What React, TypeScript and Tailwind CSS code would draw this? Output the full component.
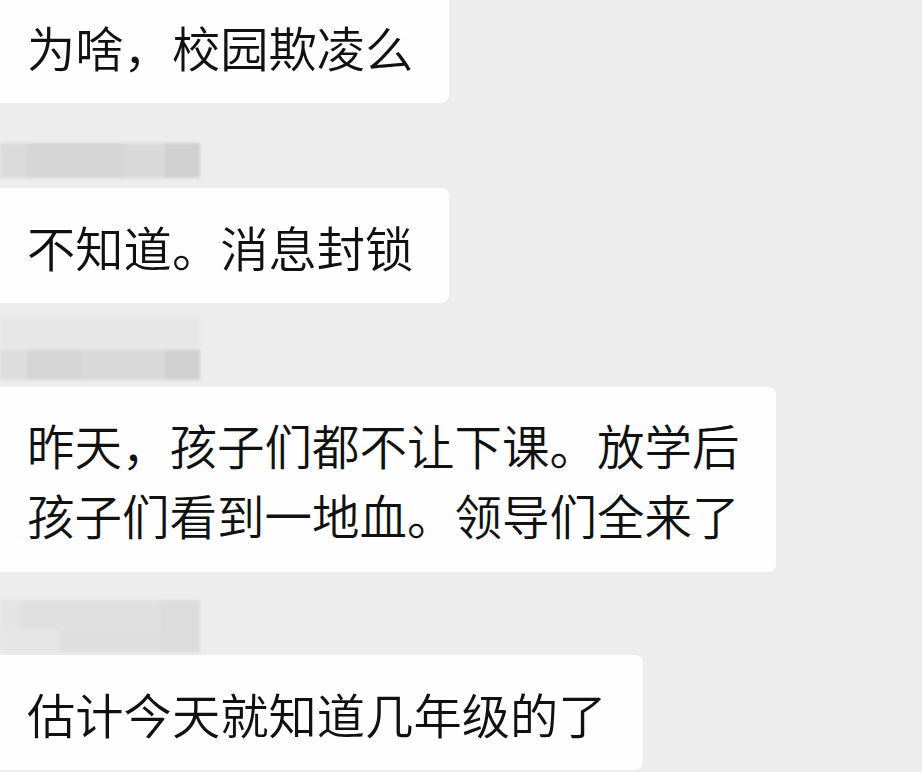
type Block = { w: number; c: string };
type Row = { h: number; blocks: Block[] };

// blurred sender names (pixelated in the screenshot)
const NAMES: Record<string, Row[]> = {
  a: [
    { h: 35, blocks: [{ w: 27, c: "#dadada" }, { w: 98, c: "#d5d5d5" }, { w: 40, c: "#d9d9d9" }, { w: 35, c: "#d0d0d0" }] },
  ],
  b: [
    { h: 33, blocks: [{ w: 200, c: "#e7e7e7" }] },
    { h: 30, blocks: [{ w: 27, c: "#dddddd" }, { w: 55, c: "#d5d5d5" }, { w: 83, c: "#d9d9d9" }, { w: 35, c: "#d0d0d0" }] },
  ],
  c: [
    { h: 30, blocks: [{ w: 20, c: "#e4e4e4" }, { w: 140, c: "#e0e0e0" }, { w: 40, c: "#dcdcdc" }] },
    { h: 23, blocks: [{ w: 60, c: "#e6e6e6" }, { w: 100, c: "#dfdfdf" }, { w: 40, c: "#dcdcdc" }] },
  ],
};

function BlurName({ rows }: { rows: Row[] }) {
  return (
    <div className="flex flex-col blur-[1.5px]">
      {rows.map((row, i) => (
        <div key={i} className="flex" style={{ height: row.h }}>
          {row.blocks.map((b, j) => (
            <div key={j} style={{ width: b.w, backgroundColor: b.c }} />
          ))}
        </div>
      ))}
    </div>
  );
}

function Bubble({ lines, size = "text-[48.3px]" }: { lines: string[]; size?: string }) {
  return (
    <div className={`-ml-3 bg-[#fefefe] rounded-lg pl-[39px] pr-[36px] pt-[23px] pb-[22px] leading-[70px] font-[350] text-[#111111] whitespace-nowrap ${size}`}>
      {lines.map((l, i) => (
        <div key={i}>{l}</div>
      ))}
    </div>
  );
}

export default function App() {
  return (
    <div
      className="w-[922px] h-[772px] overflow-hidden bg-[#ededed] flex flex-col items-start"
      style={{ fontFamily: '"Noto Sans CJK SC", "Noto Sans", sans-serif' }}
    >
      <div className="-mt-[12px]">
        <Bubble lines={["为啥，校园欺凌么"]} />
      </div>

      <div className="mt-[40px]">
        <BlurName rows={NAMES.a} />
      </div>
      <div className="mt-[10px]">
        <Bubble lines={["不知道。消息封锁"]} />
      </div>

      <div className="mt-[14px]">
        <BlurName rows={NAMES.b} />
      </div>
      <div className="mt-[7px]">
        <Bubble
          size="text-[47.5px]"
          lines={["昨天，孩子们都不让下课。放学后", "孩子们看到一地血。领导们全来了"]}
        />
      </div>

      <div className="mt-[28px]">
        <BlurName rows={NAMES.c} />
      </div>
      <div className="mt-[2px]">
        <Bubble lines={["估计今天就知道几年级的了"]} />
      </div>
    </div>
  );
}
